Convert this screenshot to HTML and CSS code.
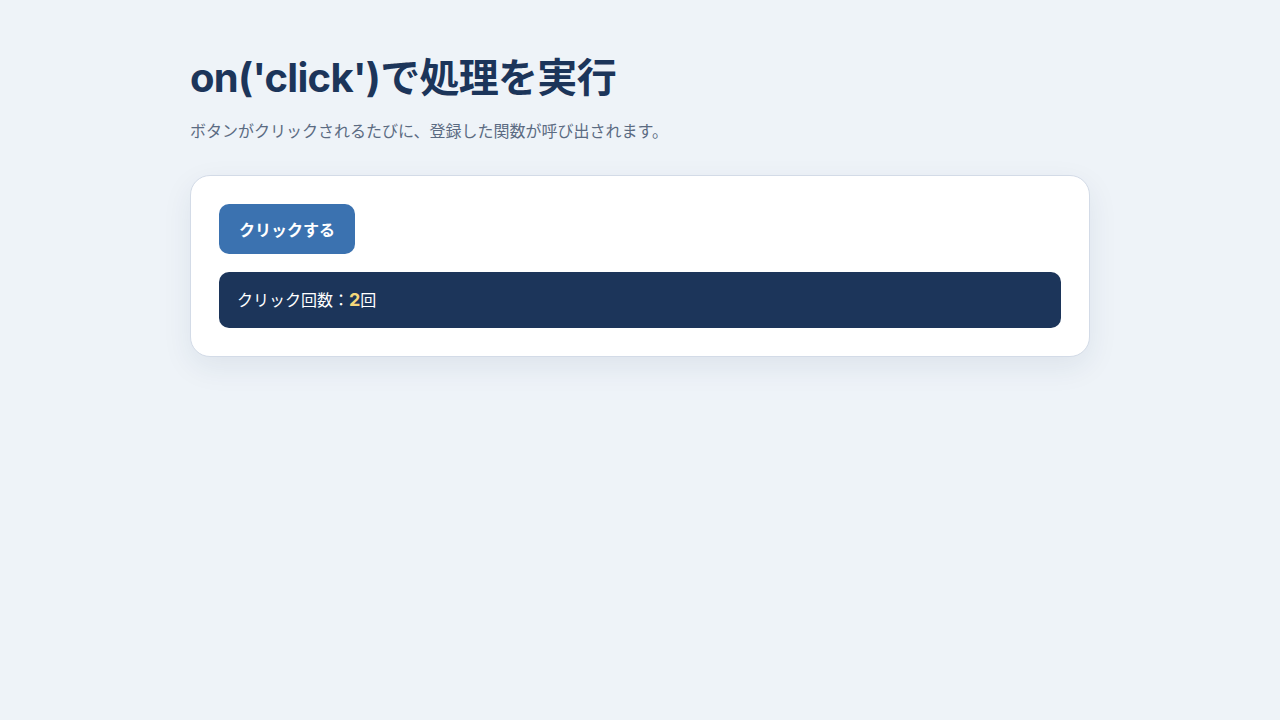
FILE: index.html
```html
<!DOCTYPE html>
<html lang="ja">
<head>
    <meta charset="UTF-8">
    <meta name="viewport" content="width=device-width, initial-scale=1.0">
    <title>on('click')で処理を実行</title>
    <link rel="stylesheet" href="styles.css">
    <script>
        let count = 2;

        window.addEventListener('DOMContentLoaded', () => {
            const button = document.getElementById('clickButton');
            const countEl = document.getElementById('count');

            button.addEventListener('click', () => {
                count++;
                countEl.textContent = count;
            });
        });
    </script>
</head>
<body>
    <div class="container">
        <h1>on('click')で処理を実行</h1>
        <p class="description">ボタンがクリックされるたびに、登録した関数が呼び出されます。</p>

        <div class="card">
            <button id="clickButton" class="button">クリックする</button>
            <div class="result">クリック回数：<span id="count" class="count">2</span>回</div>
        </div>
    </div>
</body>
</html>
```

FILE: styles.css
```css
body {
    font-family: Inter, "Noto Sans CJK JP", sans-serif;
    color: #1c355a;
    background: #eef3f8;
    margin: 0;
    padding: 54px 0;
}
.container {
    max-width: 900px;
    margin: 0 auto;
}
h1 {
    font-size: 40px;
    line-height: 48px;
    font-weight: 700;
    margin: 0 0 16px;
    letter-spacing: -0.7px;
}
.description {
    font-size: 16px;
    line-height: 26px;
    color: #5b6b82;
    margin: 0 0 31px;
}
.card {
    background: #fff;
    border: 1px solid #d3dbe7;
    border-radius: 20px;
    padding: 28px;
    box-shadow: 0 10px 30px rgba(28, 53, 90, 0.08);
}
.button {
    display: block;
    height: 50px;
    padding: 0 20px;
    border: none;
    border-radius: 10px;
    background: #3b72b0;
    color: #fff;
    font-family: inherit;
    font-size: 16px;
    font-weight: 700;
    cursor: pointer;
}
.result {
    margin-top: 18px;
    background: #1c355a;
    color: #fff;
    border-radius: 10px;
    padding: 16px 18px;
    font-size: 16px;
    line-height: 24px;
}
.count {
    color: #f4d77a;
    font-weight: 700;
    font-size: 18px;
}
```
